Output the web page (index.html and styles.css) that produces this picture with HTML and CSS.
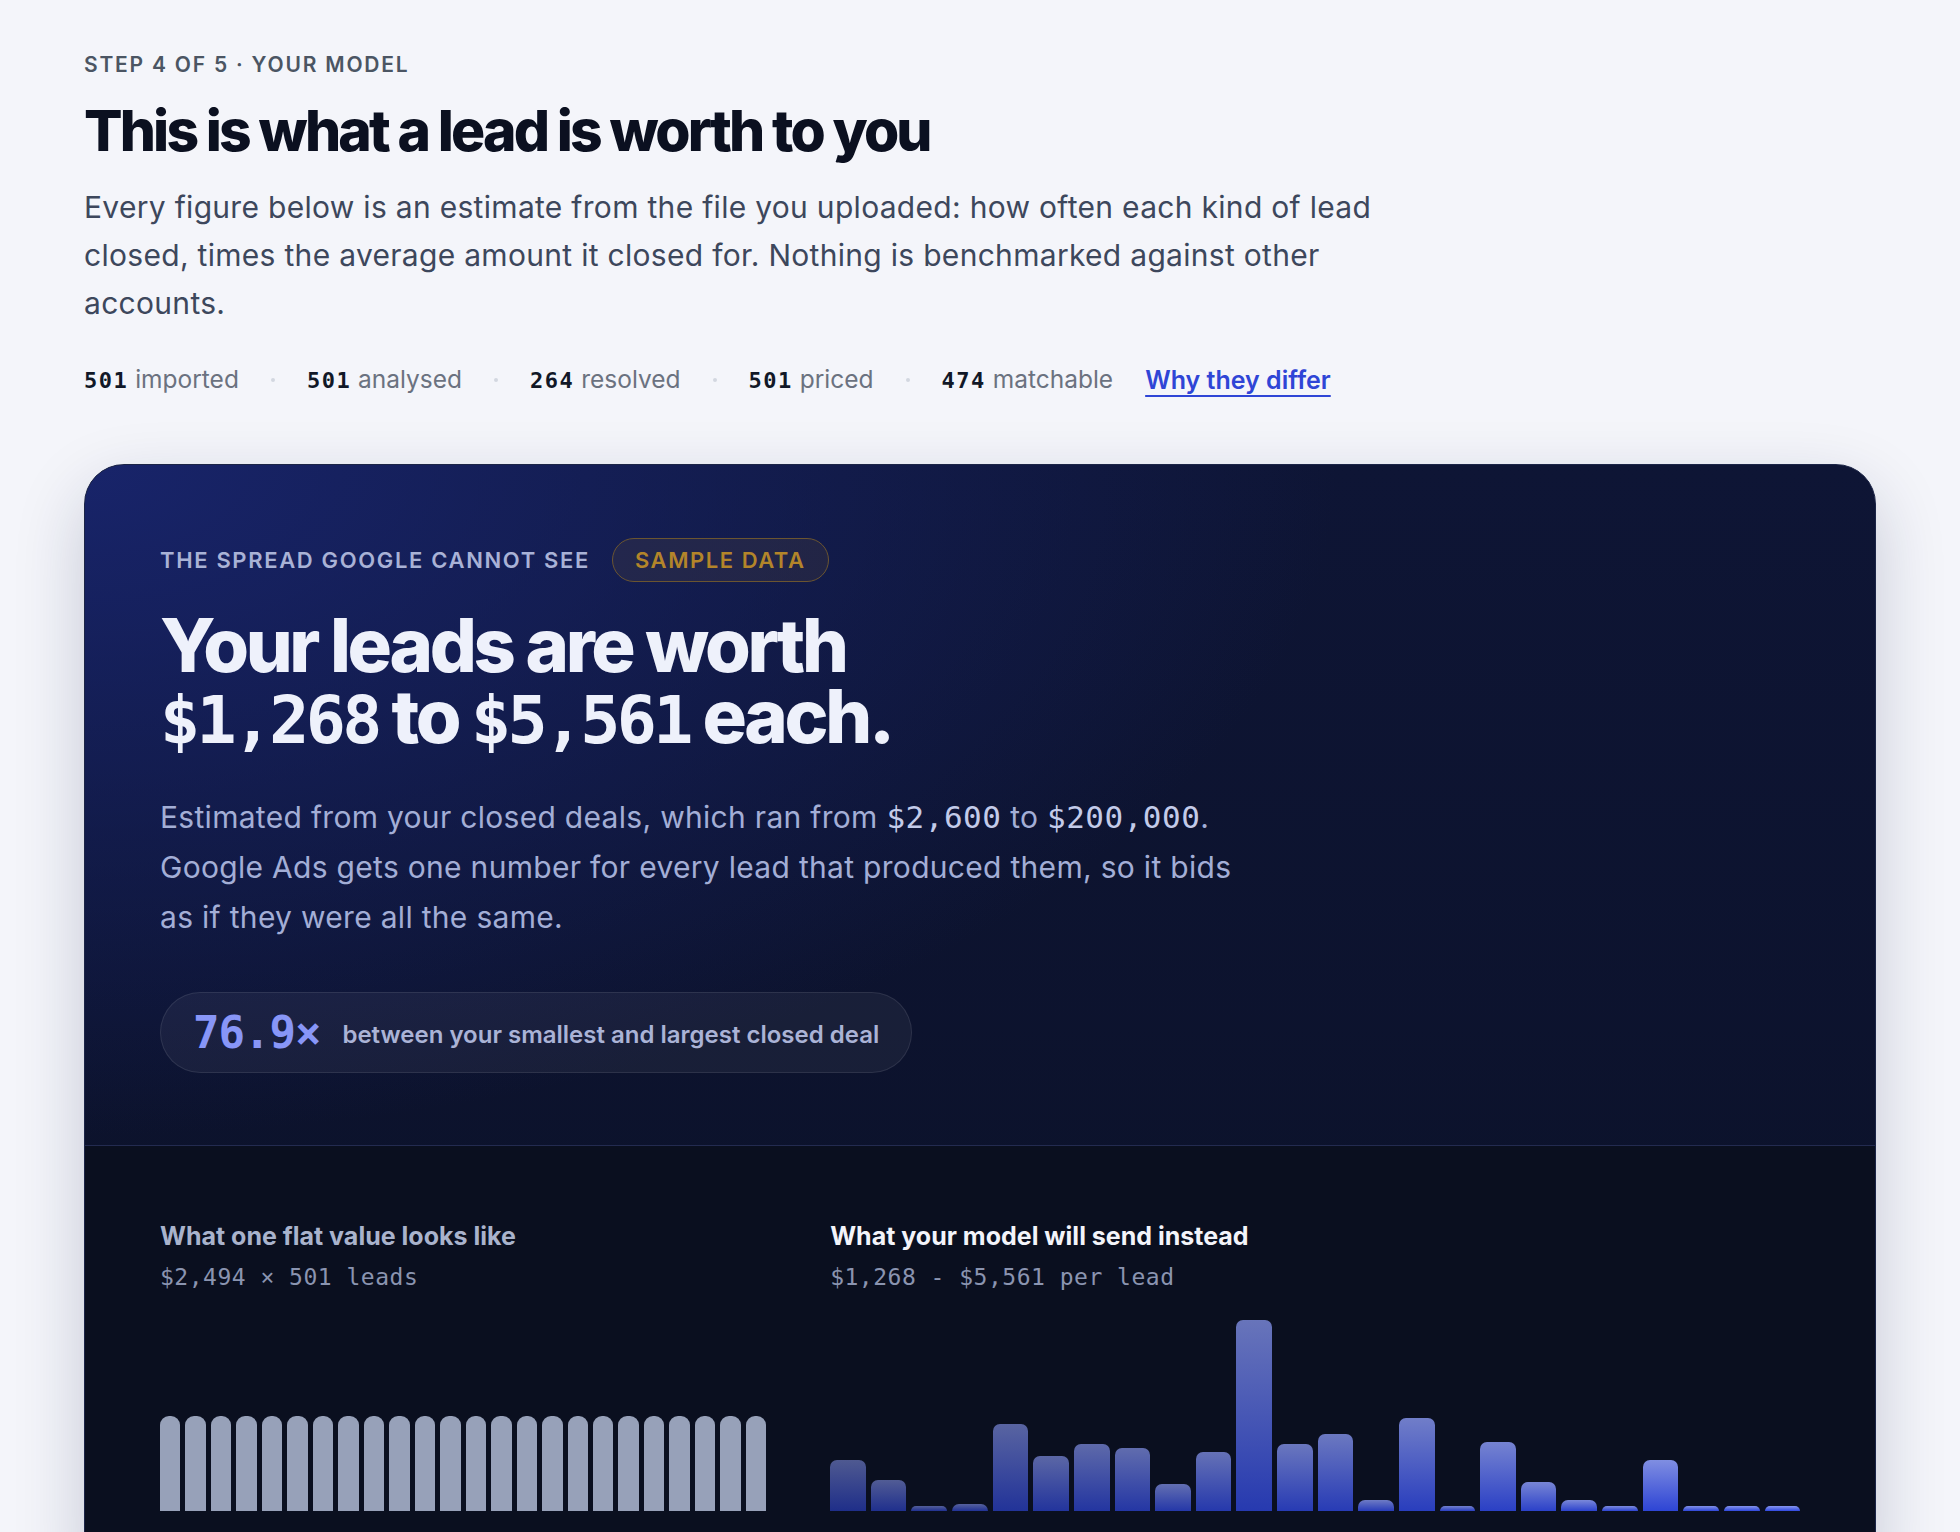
FILE: index.html
```html
<!DOCTYPE html>
<html lang="en">
<head>
  <meta charset="UTF-8">
  <meta name="viewport" content="width=device-width, initial-scale=1.0">
  <title>Your model - Step 4 of 5</title>
  <link rel="stylesheet" href="styles.css">
</head>
<body>
  <main class="page">

    <!-- Step header -->
    <p class="eyebrow">Step 4 of 5 · Your model</p>
    <h1 class="title">This is what a lead is worth to you</h1>
    <p class="intro">Every figure below is an estimate from the file you uploaded: how often each kind of lead closed, times the average amount it closed for. Nothing is benchmarked against other accounts.</p>

    <!-- Import counts -->
    <div class="counts">
      <span class="count"><b>501</b> imported</span>
      <span class="sep"></span>
      <span class="count"><b>501</b> analysed</span>
      <span class="sep"></span>
      <span class="count"><b>264</b> resolved</span>
      <span class="sep"></span>
      <span class="count"><b>501</b> priced</span>
      <span class="sep"></span>
      <span class="count"><b>474</b> matchable</span>
      <a class="counts-link" href="#">Why they differ</a>
    </div>

    <!-- Spread card -->
    <section class="spread">
      <div class="spread-top">
        <div class="spread-label">
          <span>The spread Google cannot see</span>
          <span class="badge">Sample data</span>
        </div>

        <h2 class="spread-title">Your leads are worth<br><span class="mono">$1,268</span> to <span class="mono">$5,561</span> each.</h2>

        <p class="spread-text">Estimated from your closed deals, which ran from <span class="mono">$2,600</span> to <span class="mono">$200,000</span>. Google Ads gets one number for every lead that produced them, so it bids as if they were all the same.</p>

        <div class="ratio">
          <span class="ratio-num">76.9×</span>
          <span class="ratio-text">between your smallest and largest closed deal</span>
        </div>
      </div>

      <div class="spread-charts">
        <div class="chart">
          <h3 class="chart-title muted">What one flat value looks like</h3>
          <p class="chart-sub">$2,494 × 501 leads</p>
          <div class="bars flat">
            <span></span><span></span><span></span><span></span><span></span><span></span>
            <span></span><span></span><span></span><span></span><span></span><span></span>
            <span></span><span></span><span></span><span></span><span></span><span></span>
            <span></span><span></span><span></span><span></span><span></span><span></span>
          </div>
        </div>

        <div class="chart">
          <h3 class="chart-title">What your model will send instead</h3>
          <p class="chart-sub">$1,268 - $5,561 per lead</p>
          <div class="bars model">
            <span style="height:51px;opacity:.55"></span>
            <span style="height:31px;opacity:.57"></span>
            <span style="height:5px;opacity:.59"></span>
            <span style="height:7px;opacity:.61"></span>
            <span style="height:87px;opacity:.63"></span>
            <span style="height:55px;opacity:.65"></span>
            <span style="height:67px;opacity:.67"></span>
            <span style="height:63px;opacity:.69"></span>
            <span style="height:27px;opacity:.71"></span>
            <span style="height:59px;opacity:.73"></span>
            <span style="height:191px;opacity:.75"></span>
            <span style="height:67px;opacity:.77"></span>
            <span style="height:77px;opacity:.78"></span>
            <span style="height:11px;opacity:.80"></span>
            <span style="height:93px;opacity:.82"></span>
            <span style="height:5px;opacity:.84"></span>
            <span style="height:69px;opacity:.86"></span>
            <span style="height:29px;opacity:.88"></span>
            <span style="height:11px;opacity:.90"></span>
            <span style="height:5px;opacity:.92"></span>
            <span style="height:51px;opacity:.94"></span>
            <span style="height:5px;opacity:.96"></span>
            <span style="height:5px;opacity:.98"></span>
            <span style="height:5px;opacity:1"></span>
          </div>
        </div>
      </div>
    </section>

  </main>
</body>
</html>
```

FILE: styles.css
```css
body {
  margin: 0;
  background-color: #f4f5fa;
  color: #0b1020;
  font-family: "Inter", "Noto Sans", sans-serif;
}

.mono {
  font-family: "DejaVu Sans Mono", "Liberation Mono", monospace;
}

.page {
  padding: 51px 84px 80px;
}

/* Step header */

.eyebrow {
  margin: 0;
  font-size: 21px;
  line-height: 28px;
  font-weight: 600;
  letter-spacing: 0.085em;
  text-transform: uppercase;
  color: #4b5563;
}

.title {
  margin: 20px 0 0;
  font-size: 57px;
  line-height: 64px;
  font-weight: 800;
  letter-spacing: -0.05em;
  color: #0b1020;
}

.intro {
  max-width: 1320px;
  margin: 20px 0 0;
  font-size: 30px;
  line-height: 48px;
  letter-spacing: 0.01em;
  color: #3d475c;
}

.counts {
  display: flex;
  align-items: center;
  gap: 32px;
  margin-top: 36px;
  font-size: 24.5px;
  line-height: 32px;
  color: #6b7280;
}

.count b {
  font-family: "DejaVu Sans Mono", monospace;
  font-size: 22px;
  font-weight: 700;
  letter-spacing: 1.5px;
  color: #111827;
}

.sep {
  width: 4px;
  height: 4px;
  border-radius: 50%;
  background-color: #d3d7e0;
}

.counts-link {
  font-size: 25px;
  color: #2f45d6;
  font-weight: 600;
  text-decoration: underline;
  text-decoration-thickness: 2px;
  text-underline-offset: 6px;
}

/* Spread card */

.spread {
  margin-top: 67px;
  border: 1px solid #1c2547;
  border-radius: 40px;
  overflow: hidden;
  background:
    radial-gradient(ellipse 70% 60% at 0% 0%, #18246a 0%, rgba(24, 36, 106, 0) 100%),
    linear-gradient(180deg, #0e1535 0%, #0b1127 100%);
  box-shadow: 0 26px 70px rgba(20, 28, 70, 0.2);
  color: #eef1fb;
}

.spread-top {
  padding: 73px 75px 72px;
  border-bottom: 1px solid #232b50;
}

.spread-label {
  display: flex;
  align-items: center;
  gap: 22px;
  font-size: 22px;
  font-weight: 600;
  letter-spacing: 0.075em;
  text-transform: uppercase;
  color: #a9b2d6;
}

.badge {
  display: inline-flex;
  align-items: center;
  height: 42px;
  padding: 0 22px;
  border: 1.5px solid #6b5530;
  border-radius: 999px;
  background-color: rgba(180, 130, 40, 0.1);
  color: #b3852a;
  font-size: 22px;
  letter-spacing: 0.07em;
}

.spread-title {
  margin: 28px 0 0;
  font-size: 74px;
  line-height: 71px;
  font-weight: 800;
  letter-spacing: -0.045em;
  color: #eef1fb;
}

.spread-title .mono {
  font-size: 0.9em;
  letter-spacing: -0.055em;
}

.spread-text {
  max-width: 1095px;
  margin: 36px 0 0;
  font-size: 30px;
  line-height: 50px;
  letter-spacing: 0.01em;
  color: #a3aed6;
}

.spread-text .mono {
  font-size: 31px;
  letter-spacing: 0.5px;
  color: #c3cbe9;
}

.ratio {
  display: inline-flex;
  align-items: center;
  gap: 22px;
  margin-top: 50px;
  height: 79px;
  padding: 0 32px;
  border: 1px solid rgba(255, 255, 255, 0.09);
  border-radius: 999px;
  background-color: rgba(255, 255, 255, 0.05);
}

.ratio-num {
  font-family: "DejaVu Sans Mono", monospace;
  font-size: 44px;
  font-weight: 700;
  letter-spacing: -1px;
  color: #8896f7;
}

.ratio-text {
  font-size: 24px;
  font-weight: 600;
  color: #aab3d6;
  padding-top: 4px;
}

/* Charts */

.spread-charts {
  display: grid;
  grid-template-columns: 5fr 8fr;
  gap: 64px;
  padding: 73px 75px 72px;
  background-color: #0a0f1f;
}

.chart-title {
  margin: 0;
  font-size: 25px;
  line-height: 34px;
  font-weight: 700;
  letter-spacing: 0;
  color: #f3f4fa;
}

.chart-title.muted {
  color: #a9b3cc;
}

.chart-sub {
  margin: 9px 0 0;
  font-family: "DejaVu Sans Mono", monospace;
  font-size: 23px;
  line-height: 30px;
  letter-spacing: 0.5px;
  color: #8a94b0;
}

.bars {
  display: flex;
  align-items: flex-end;
  gap: 5px;
  height: 200px;
  margin-top: 19px;
}

.bars span {
  flex: 1;
}

.flat span {
  height: 95px;
  border-radius: 9px 9px 0 0;
  background-color: #97a1b9;
}

.model span {
  border-radius: 7px 7px 0 0;
  background: linear-gradient(180deg, #8796ee 0%, #3048e0 100%);
}
```
